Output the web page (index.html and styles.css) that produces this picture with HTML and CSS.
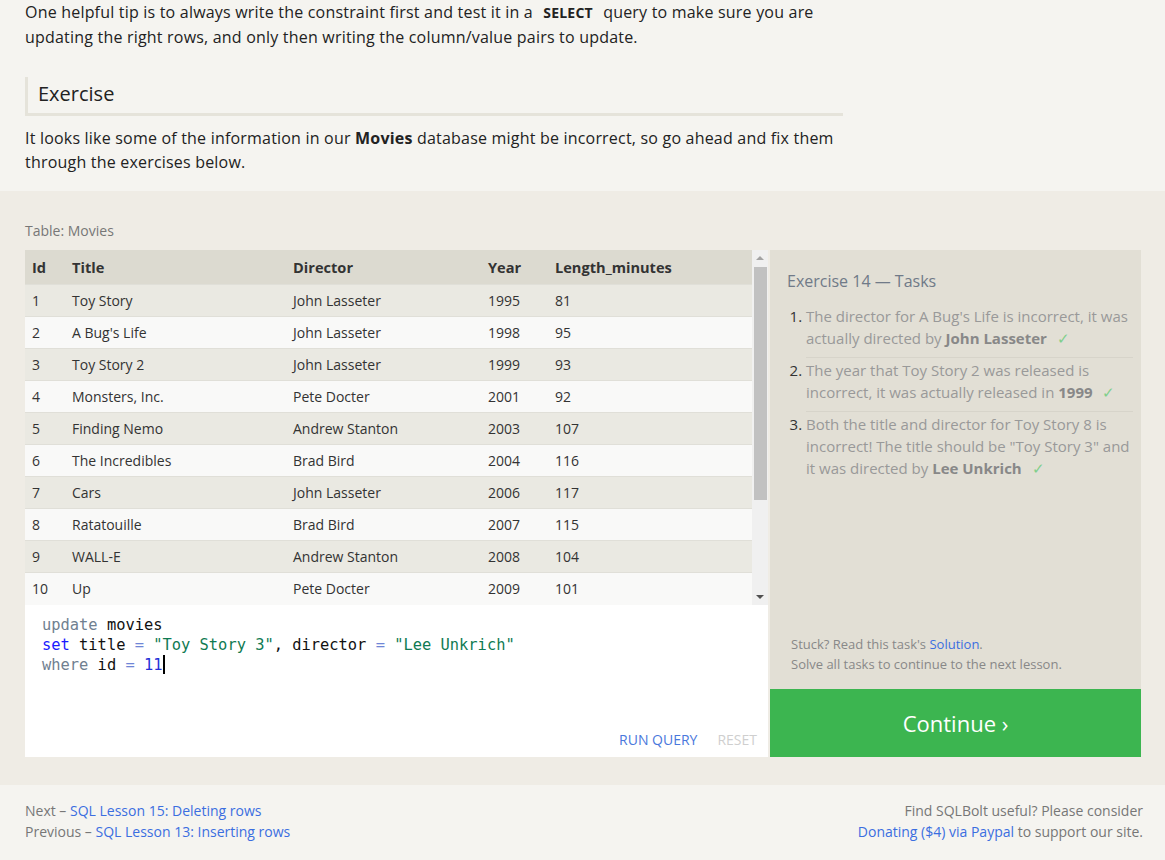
FILE: index.html
```html
<!DOCTYPE html>
<html>
<head>
<meta charset="utf-8">
<link rel="stylesheet" href="styles.css">
</head>
<body>
<section class="lesson">
  <p class="para">One helpful tip is to always write the constraint first and test it in a <span class="kw">SELECT</span> query to make sure you are updating the right rows, and only then writing the column/value pairs to update.</p>
  <h3 class="ex-head">Exercise</h3>
  <p class="para para-ex">It looks like some of the information in our <strong>Movies</strong> database might be incorrect, so go ahead and fix them through the exercises below.</p>
</section>

<section class="band">
  <div class="table-label">Table: Movies</div>
  <div class="workspace">
    <div class="left">
      <div class="table-wrap">
        <div class="table-view">
          <table class="movies">
            <colgroup>
              <col class="c-id"><col class="c-title"><col class="c-dir"><col class="c-year"><col class="c-len">
            </colgroup>
            <thead>
              <tr><th>Id</th><th>Title</th><th>Director</th><th>Year</th><th>Length_minutes</th></tr>
            </thead>
            <tbody>
              <tr><td>1</td><td>Toy Story</td><td>John Lasseter</td><td>1995</td><td>81</td></tr>
              <tr><td>2</td><td>A Bug's Life</td><td>John Lasseter</td><td>1998</td><td>95</td></tr>
              <tr><td>3</td><td>Toy Story 2</td><td>John Lasseter</td><td>1999</td><td>93</td></tr>
              <tr><td>4</td><td>Monsters, Inc.</td><td>Pete Docter</td><td>2001</td><td>92</td></tr>
              <tr><td>5</td><td>Finding Nemo</td><td>Andrew Stanton</td><td>2003</td><td>107</td></tr>
              <tr><td>6</td><td>The Incredibles</td><td>Brad Bird</td><td>2004</td><td>116</td></tr>
              <tr><td>7</td><td>Cars</td><td>John Lasseter</td><td>2006</td><td>117</td></tr>
              <tr><td>8</td><td>Ratatouille</td><td>Brad Bird</td><td>2007</td><td>115</td></tr>
              <tr><td>9</td><td>WALL-E</td><td>Andrew Stanton</td><td>2008</td><td>104</td></tr>
              <tr><td>10</td><td>Up</td><td>Pete Docter</td><td>2009</td><td>101</td></tr>
            </tbody>
          </table>
        </div>
        <div class="scrollbar">
          <div class="sb-btn"><span class="tri-up"></span></div>
          <div class="sb-track"><div class="sb-thumb"></div></div>
          <div class="sb-btn"><span class="tri-down"></span></div>
        </div>
      </div>
      <div class="editor">
        <pre class="code"><span class="k1">update</span> movies
<span class="k2">set</span> title <span class="op">=</span> <span class="str">"Toy Story 3"</span>, director <span class="op">=</span> <span class="str">"Lee Unkrich"</span>
<span class="k1">where</span> id <span class="op">=</span> <span class="num">11</span><span class="caret"></span></pre>
        <div class="actions">
          <span class="run">RUN QUERY</span>
          <span class="reset">RESET</span>
        </div>
      </div>
    </div>
    <div class="right">
      <div class="tasks">
        <h4 class="tasks-title">Exercise 14 — Tasks</h4>
        <ol class="task-list">
          <li><span class="task-text">The director for A Bug's Life is incorrect, it was actually directed by <b>John Lasseter</b> <span class="check">✓</span></span></li>
          <li><span class="task-text">The year that Toy Story 2 was released is incorrect, it was actually released in <b>1999</b> <span class="check">✓</span></span></li>
          <li><span class="task-text">Both the title and director for Toy Story 8 is incorrect! The title should be "Toy Story 3" and it was directed by <b>Lee Unkrich</b> <span class="check">✓</span></span></li>
        </ol>
        <div class="stuck">
          <div>Stuck? Read this task's <a class="link" href="#">Solution</a>.</div>
          <div>Solve all tasks to continue to the next lesson.</div>
        </div>
      </div>
      <div class="continue">Continue ›</div>
    </div>
  </div>
</section>

<footer class="footer">
  <div class="nav">
    <div>Next – <a class="link" href="#">SQL Lesson 15: Deleting rows</a></div>
    <div>Previous – <a class="link" href="#">SQL Lesson 13: Inserting rows</a></div>
  </div>
  <div class="donate">
    <div>Find SQLBolt useful? Please consider</div>
    <div><a class="link" href="#">Donating ($4) via Paypal</a> to support our site.</div>
  </div>
</footer>
</body>
</html>
```

FILE: styles.css
```css
* { box-sizing: border-box; }
html, body { margin: 0; padding: 0; }
body {
  font-family: "Open Sans", "Noto Sans", sans-serif;
  color: #222;
  background: #f5f4f0;
  width: 1165px;
}

.lesson {
  background: #f5f4f0;
  padding: 0 25px 17px 25px;
}
.para {
  margin: 0;
  width: 830px;
  font-size: 16px;
  line-height: 24px;
  letter-spacing: 0.2px;
}
.kw {
  font-weight: 700;
  font-size: 14px;
  padding: 0 6px;
}
.ex-head {
  margin: 28px 0 10px 0;
  width: 818px;
  font-size: 20px;
  font-weight: 400;
  line-height: 34px;
  padding: 0 0 2px 10px;
  border-left: 3px solid #e5e3da;
  border-bottom: 3px solid #e5e3da;
  color: #222;
}

.band {
  background: #efece5;
  padding: 30px 24px 28px 25px;
}
.table-label {
  font-size: 14px;
  line-height: 20px;
  color: #777;
  margin-bottom: 9px;
}
.workspace {
  display: flex;
  gap: 2px;
}
.left {
  width: 743px;
  display: flex;
  flex-direction: column;
}
.table-wrap {
  height: 355px;
  display: flex;
  background: #f9f9f8;
}
.table-view {
  flex: 1;
  overflow: hidden;
}
.movies {
  width: 100%;
  border-collapse: collapse;
  table-layout: fixed;
  font-size: 14px;
  color: #333;
}
.c-id { width: 40px; }
.c-title { width: 221px; }
.c-dir { width: 195px; }
.c-year { width: 67px; }
.movies th {
  background: #dcdad0;
  text-align: left;
  font-weight: 700;
  font-size: 14.6px;
  height: 34px;
  padding: 0 7px;
  color: #333;
}
.movies td {
  height: 32px;
  padding: 0 7px;
  border-top: 1px solid #e0dfd8;
  white-space: nowrap;
}
.movies tbody tr:nth-child(odd) td { background: #eae9e2; }
.movies tbody tr:nth-child(even) td { background: #f9f9f8; }

.scrollbar {
  width: 16px;
  background: #f0f0f0;
  display: flex;
  flex-direction: column;
}
.sb-btn {
  height: 16px;
  display: flex;
  align-items: center;
  justify-content: center;
}
.tri-up {
  width: 0;
  height: 0;
  border-left: 4px solid transparent;
  border-right: 4px solid transparent;
  border-bottom: 4px solid #a3a3a3;
}
.tri-down {
  width: 0;
  height: 0;
  border-left: 4px solid transparent;
  border-right: 4px solid transparent;
  border-top: 4px solid #505050;
}
.sb-track {
  flex: 1;
  padding: 1px 1px 0 2px;
}
.sb-thumb {
  height: 233px;
  background: #c1c1c1;
}

.editor {
  background: #fff;
  height: 152px;
  display: flex;
  flex-direction: column;
  justify-content: space-between;
  padding: 10px 11px 7px 17px;
}
.code {
  margin: 0;
  font-family: "DejaVu Sans Mono", "Liberation Mono", monospace;
  font-size: 15.4px;
  line-height: 20px;
  color: #111;
}
.k1 { color: #708090; }
.k2 { color: #1a1aff; }
.op { color: #6f86d6; }
.str { color: #0f7a52; }
.num { color: #2430d8; }
.caret {
  display: inline-block;
  width: 2px;
  height: 19px;
  background: #000;
  vertical-align: -4px;
}
.actions {
  display: flex;
  justify-content: flex-end;
  gap: 20px;
  font-size: 14px;
  line-height: 20px;
}
.run { color: #4a78dc; }
.reset { color: #cfcfcf; }

.right {
  width: 371px;
  display: flex;
  flex-direction: column;
}
.tasks {
  background: #e2dfd5;
  height: 439px;
  padding: 18px 8px 15px 17px;
  display: flex;
  flex-direction: column;
}
.tasks-title {
  margin: 0 0 11px 0;
  font-size: 16px;
  font-weight: 400;
  line-height: 26px;
  color: #707a88;
}
.task-list {
  margin: 0;
  padding: 0 0 0 19px;
  font-size: 15px;
  line-height: 22px;
  color: #333;
  flex: 1;
}
.task-list li {
  padding: 0 0 8px 0;
}
.task-list li + li {
  border-top: 1px solid #d7d4ca;
  padding-top: 1px;
}
.task-text { color: #999; }
.task-text b { color: #888; }
.check {
  color: #7fcf8c;
  margin-left: 6px;
}
.stuck {
  font-size: 13px;
  line-height: 20px;
  color: #888;
  padding-left: 4px;
}
.link {
  color: #3b6ee0;
  text-decoration: none;
}
.continue {
  background: #3cb550;
  color: #fff;
  height: 68px;
  display: flex;
  align-items: center;
  justify-content: center;
  font-size: 22px;
}

.footer {
  background: #f5f4f0;
  display: flex;
  justify-content: space-between;
  padding: 15px 22px 20px 25px;
  font-size: 14px;
  line-height: 21px;
  color: #777;
}
.donate { text-align: right; }
```
